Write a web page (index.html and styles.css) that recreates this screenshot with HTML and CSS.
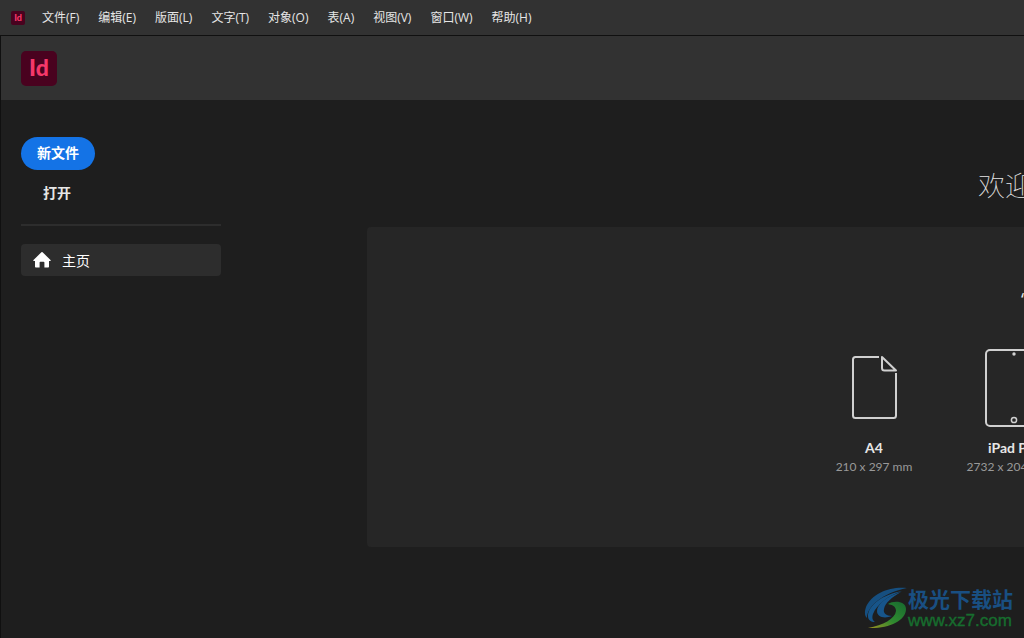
FILE: index.html
```html
<!DOCTYPE html>
<html lang="zh-CN">
<head>
<meta charset="utf-8">
<title>InDesign</title>
<link rel="stylesheet" href="styles.css">
</head>
<body>
<nav class="menubar">
  <span class="logo logo-small">Id</span>
  <div class="menus">
    <button class="menu">文件(F)</button>
    <button class="menu">编辑(E)</button>
    <button class="menu">版面(L)</button>
    <button class="menu">文字(T)</button>
    <button class="menu">对象(O)</button>
    <button class="menu">表(A)</button>
    <button class="menu">视图(V)</button>
    <button class="menu">窗口(W)</button>
    <button class="menu">帮助(H)</button>
  </div>
</nav>
<div class="workspace">
  <header class="header"><span class="logo logo-large">Id</span></header>
  <div class="body">
    <aside class="sidebar">
      <button class="new-file">新文件</button>
      <button class="open">打开</button>
      <hr class="divider">
      <a class="home" href="#">
        <svg class="home-icon" viewBox="0 0 18 16" aria-hidden="true"><path fill="#fff" d="M8.400.300a.9.900 0 0 1 1.200 0l7.900 7.600c.6.600.3 1.100-.4 1.100H16v5.700c0 .5-.3.800-.8.800h-3.800V10.500a.8.800 0 0 0-.8-.8H7.400a.8.800 0 0 0-.8.800v5H2.800c-.5 0-.8-.3-.8-.8V9H.900C.2 9-.1 8.500.500 7.900z"/></svg>
        <span>主页</span>
      </a>
    </aside>
    <main class="main">
      <h1 class="title">欢迎</h1>
      <section class="panel">
        <p class="tagline">“</p>
        <div class="presets">
          <button class="preset">
            <svg class="preset-icon" width="46" height="80" viewBox="0 0 46 80" fill="none" stroke="#d0d0d0" stroke-width="2" aria-hidden="true"><path d="M28 9H4.500Q2 9 2 11.500V67.500Q2 70 4.500 70H42.500Q45 70 45 67.500V25"/><path d="M31 9V20Q31 22.500 33.500 22.500H45Z" stroke-linejoin="round"/></svg>
            <span class="name">A4</span>
            <span class="size">210 x 297 mm</span>
          </button>
          <button class="preset">
            <svg class="preset-icon" width="58" height="80" viewBox="0 0 58 80" fill="none" stroke="#d0d0d0" stroke-width="2" aria-hidden="true"><rect x="1" y="2" width="56" height="76" rx="4"/><circle cx="29" cy="6" r="1.700" fill="#d0d0d0" stroke="none"/><circle cx="29" cy="72" r="2.600" stroke-width="1.500"/></svg>
            <span class="name">iPad Pro</span>
            <span class="size">2732 x 2048 像素</span>
          </button>
        </div>
      </section>
    </main>
  </div>
</div>
<div class="watermark">
  <svg class="swirl" width="44" height="42" viewBox="0 0 44 42" aria-hidden="true">
    <defs><linearGradient id="leaf" x1="0" x2="1" y1="1" y2="0"><stop offset="0" stop-color="#a09420"/><stop offset=".45" stop-color="#2f8a30"/><stop offset="1" stop-color="#17692f"/></linearGradient></defs>
    <path fill="#164f80" d="M43 1C27-1 8 6 2 20c-2 6-1 9 1 11C3 19 19 6 43 1Z"/>
    <path fill="#17558a" d="M38 4C20 7 4 18 4 29c0 4 3 6 7 6-3-2-3-5-2-8C13 17 24 9 38 4Z"/>
    <path fill="#17558a" d="M37 5C23 9 13 17 13 24c0 6 7 8 15 5-6 0-9-3-8-7 1-6 8-12 17-17Z"/>
    <path fill="url(#leaf)" d="M24 17c6-4 18-3 18 5 0 12-18 20-38 19 15-3 27-9 28-17 0-5-4-6-8-7Z"/>
  </svg>
  <div class="site">
    <span class="site-name">极光下载站</span>
    <span class="site-url">www.xz7.com</span>
  </div>
</div>
</body>
</html>
```
FILE: styles.css
```css
* { box-sizing: border-box; }
body {
  margin: 0;
  min-height: 100vh;
  display: flex;
  flex-direction: column;
  background: #1e1e1e;
  color: #e6e6e6;
  font-family: "Open Sans", "Noto Sans CJK SC", sans-serif;
  overflow: hidden;
}
button {
  padding: 0;
  border: 0;
  background: none;
  color: inherit;
  font: inherit;
  white-space: nowrap;
}
.menubar {
  display: flex;
  align-items: center;
  gap: 17px;
  height: 35px;
  padding-left: 11px;
  background: #323232;
}
.menus { display: flex; gap: 19px; }
.menu { font-size: 12px; line-height: 20px; }
.logo {
  display: flex;
  align-items: center;
  justify-content: center;
  background: #49021f;
  color: #f5386a;
  font-family: Lato, sans-serif;
  font-weight: 900;
}
.logo-small { width: 14px; height: 14px; padding-bottom: 1px; border-radius: 2px; font-size: 9px; line-height: 13px; }
.logo-large { width: 36px; height: 35px; padding-bottom: 2px; border-radius: 5px; font-size: 23px; }
.workspace {
  flex: 1;
  display: flex;
  flex-direction: column;
  border-top: 1px solid #101010;
  border-left: 1px solid #101010;
}
.header {
  display: flex;
  align-items: center;
  height: 64px;
  padding-left: 20px;
  background: #323232;
}
.body { flex: 1; display: flex; }
.sidebar {
  flex: none;
  display: flex;
  flex-direction: column;
  align-items: flex-start;
  width: 220px;
  padding: 37px 0 0 20px;
}
.new-file {
  height: 33px;
  padding: 0 16px 4px;
  border-radius: 17px;
  background: #1473e6;
  color: #fff;
  font-size: 14px;
  font-weight: 700;
}
.open { margin: 11px 0 0 22px; font-size: 14px; line-height: 24px; font-weight: 700; }
.divider { width: 100%; height: 2px; margin: 19px 0 18px; border: 0; background: #2d2d2d; }
.home {
  display: flex;
  align-items: center;
  gap: 11px;
  width: 100%;
  height: 32px;
  padding-left: 12px;
  border-radius: 4px;
  background: #2d2d2d;
  color: #fff;
  font-size: 14px;
  text-decoration: none;
}
.home-icon { width: 18px; height: 16px; }
.main { flex: 1; min-width: 0; padding: 65px 0 0 146px; overflow: hidden; }
.title {
  margin: 0 0 22px 611px;
  font-family: "Noto Sans CJK SC", sans-serif;
  font-size: 27px;
  line-height: 40px;
  font-weight: 100;
  white-space: nowrap;
}
.panel { height: 320px; padding-top: 56px; border-radius: 4px 0 0 4px; background: #262626; }
.tagline { margin: 0 0 33px 654px; font-size: 18px; line-height: 32px; }
.presets { display: flex; padding-left: 437px; }
.preset { flex: none; width: 140px; display: flex; flex-direction: column; align-items: center; }
.preset-icon { margin-bottom: 10px; }
.name { font-family: Lato, sans-serif; font-size: 14px; line-height: 20px; font-weight: 700; }
.size { color: #999; font-family: Lato, "Noto Sans CJK SC", sans-serif; font-size: 12px; line-height: 18px; }
.watermark { position: absolute; right: 11px; bottom: 7px; display: flex; }
.site { display: flex; flex-direction: column; }
.site-name { color: #194f82; font-size: 21px; line-height: 24px; font-weight: 700; }
.site-url {
  color: #176d2e;
  font-family: "Liberation Sans", sans-serif;
  font-size: 17px;
  line-height: 20px;
  -webkit-text-stroke: 0.4px #176d2e;
}
```
